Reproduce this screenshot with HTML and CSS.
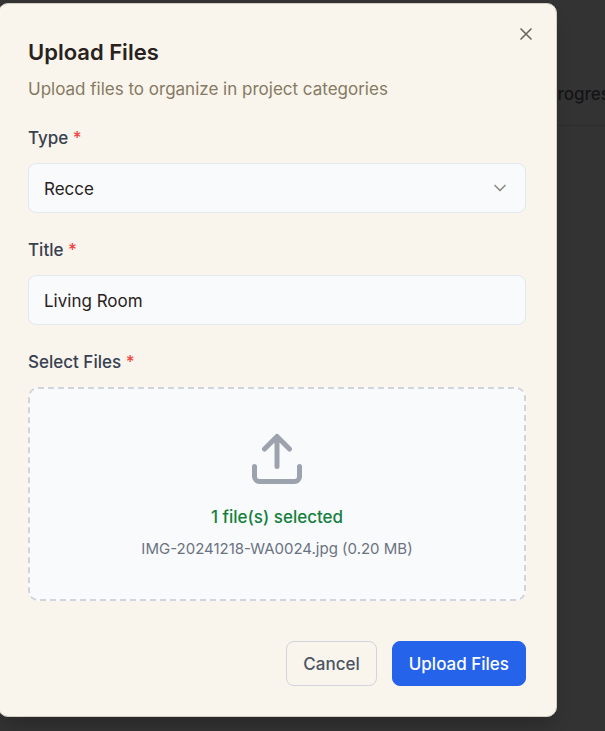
FILE: index.html
```html
<!DOCTYPE html>
<html lang="en">
<head>
<meta charset="utf-8">
<meta name="viewport" content="width=device-width, initial-scale=1">
<title>Upload Files</title>
<link rel="stylesheet" href="styles.css">
</head>
<body>
<div class="page" aria-hidden="true">
  <div class="page-tabs"><span>Progress</span></div>
</div>
<main class="dialog" role="dialog" aria-labelledby="dialog-title">
  <button class="close" type="button" aria-label="Close">
    <svg viewBox="0 0 24 24"><path d="M18 6 6 18M6 6l12 12"/></svg>
  </button>
  <header class="head">
    <h1 id="dialog-title">Upload Files</h1>
    <p>Upload files to organize in project categories</p>
  </header>
  <form class="form">
    <div class="field">
      <label for="type">Type <span class="required">*</span></label>
      <div class="select">
        <select id="type"><option>Recce</option></select>
        <svg viewBox="0 0 24 24"><path d="m6 9 6 6 6-6"/></svg>
      </div>
    </div>
    <div class="field">
      <label for="title">Title <span class="required">*</span></label>
      <input id="title" type="text" value="Living Room">
    </div>
    <div class="field">
      <label for="files">Select Files <span class="required">*</span></label>
      <label class="dropzone" for="files">
        <svg viewBox="0 0 24 24"><path d="M21 15v4a2 2 0 0 1-2 2H5a2 2 0 0 1-2-2v-4M17 8l-5-5-5 5M12 3v12"/></svg>
        <span class="count">1 file(s) selected</span>
        <span class="file">IMG-20241218-WA0024.jpg (0.20 MB)</span>
      </label>
      <input id="files" type="file" hidden>
    </div>
    <div class="actions">
      <button class="button" type="button">Cancel</button>
      <button class="button primary" type="submit">Upload Files</button>
    </div>
  </form>
</main>
</body>
</html>
```

FILE: styles.css
```css
* {
  box-sizing: border-box;
}

body {
  margin: 0;
  min-height: 100vh;
  display: grid;
  align-items: start;
  overflow: hidden;
  background: #333333;
  font: 400 17px/24px Inter, "Liberation Sans", sans-serif;
  color: #29221c;
}

.page,
.dialog {
  grid-area: 1 / 1;
  min-width: 0;
}

.page-tabs {
  display: flex;
  justify-content: flex-end;
  margin-right: -14px;
  padding: 82px 0 19px;
  border-bottom: 1px solid #2d2d2d;
  color: #131416;
  font-weight: 500;
}

.dialog {
  position: relative;
  margin: 3px 48px 14px -2px;
  padding: 37px 30px 30px 29px;
  border: 1px solid #d3cec3;
  border-radius: 10px;
  background: #f9f4ec;
  box-shadow: 0 12px 18px -4px rgb(0 0 0 / 20%);
}

svg {
  display: block;
  fill: none;
  stroke: currentColor;
  stroke-width: 2;
  stroke-linecap: round;
  stroke-linejoin: round;
}

.close {
  position: absolute;
  top: 20px;
  right: 20px;
  padding: 0;
  border: 0;
  background: none;
  color: #6d665f;
}

.close svg {
  width: 20px;
  height: 20px;
}

.head {
  display: grid;
  gap: 14px;
  margin-bottom: 26px;
}

h1 {
  margin: 0;
  font-size: 22px;
  font-weight: 600;
  line-height: 22px;
}

.head p {
  margin: 0;
  color: #857a62;
}

.form {
  display: grid;
  gap: 26px;
}

.field {
  display: grid;
  gap: 14px;
}

.field > label:first-child {
  color: #374151;
  font-weight: 500;
  line-height: 22px;
}

.field .required {
  color: #ef4444;
}

.select {
  display: grid;
  align-items: center;
}

.select > * {
  grid-area: 1 / 1;
}

.select svg {
  width: 20px;
  height: 20px;
  margin-right: 16px;
  justify-self: end;
  color: #8f8a86;
  pointer-events: none;
}

select,
input[type="text"] {
  appearance: none;
  width: 100%;
  height: 50px;
  padding: 2px 15px 0;
  border: 1px solid #e2e8f0;
  border-radius: 8px;
  background: #f8fafc;
  color: inherit;
  font: inherit;
}

.field .dropzone {
  display: flex;
  flex-direction: column;
  align-items: center;
  padding: 40px 40px 38px;
  border: 2px dashed #d1d5db;
  border-radius: 10px;
  background: #f8fafc;
}

.dropzone svg {
  width: 60px;
  height: 60px;
  color: #9ca3af;
}

.count {
  margin: 16px 0 8px;
  color: #15803d;
  font-weight: 500;
}

.file {
  color: #6b7280;
  font-size: 15px;
  line-height: 24px;
}

.actions {
  display: flex;
  justify-content: flex-end;
  gap: 15px;
  padding-top: 14px;
}

.button {
  height: 45px;
  padding: 0 16px;
  border: 1px solid #d1d5db;
  border-radius: 8px;
  background: transparent;
  color: #4b5563;
  font: inherit;
  font-weight: 500;
}

.primary {
  border-color: #2563eb;
  background: #2563eb;
  color: #ffffff;
}
```
